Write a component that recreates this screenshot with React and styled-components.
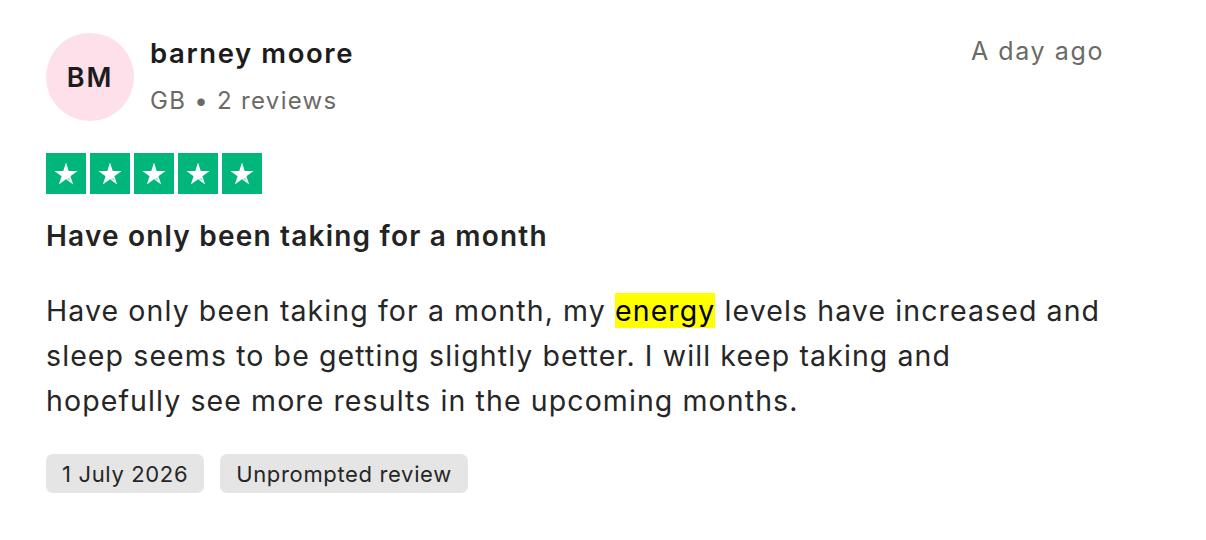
import styled, { createGlobalStyle } from 'styled-components';

const GlobalStyle = createGlobalStyle`
  body {
    margin: 0;
    background: #ffffff;
    font-family: Inter, "Helvetica Neue", Arial, sans-serif;
    color: #1c1c1c;
  }
`;

const Card = styled.article`
  width: 1058px;
  padding: 33px 0 0 46px;
`;

const Header = styled.header`
  display: flex;
  align-items: flex-start;
  gap: 16px;
`;

const Avatar = styled.div`
  width: 88px;
  height: 88px;
  border-radius: 50%;
  background: #fde0ea;
  display: flex;
  align-items: center;
  justify-content: center;
  font-size: 27px;
  font-weight: 600;
  letter-spacing: 1.8px;
  color: #1c1c1c;
`;

const Who = styled.div`
  flex: 1;
  display: flex;
  flex-direction: column;
  gap: 16px;
  padding-top: 3px;
`;

const Name = styled.div`
  font-size: 27.5px;
  font-weight: 600;
  letter-spacing: 1.6px;
`;

const Meta = styled.div`
  font-size: 24px;
  color: #6b6a66;
  letter-spacing: 1.3px;
`;

const When = styled.time`
  font-size: 25px;
  color: #6b6a66;
  padding-top: 3px;
  letter-spacing: 1.6px;
`;

const Stars = styled.div`
  display: flex;
  gap: 4px;
  margin-top: 32px;
`;

const StarBox = styled.div`
  width: 40px;
  height: 41px;
  background: ${(p) => p.color};
  display: flex;
  align-items: center;
  justify-content: center;
`;

const Title = styled.h2`
  margin: 25px 0 0;
  font-size: 28px;
  font-weight: 600;
  letter-spacing: 1.2px;
  color: #232323;
`;

const Body = styled.p`
  margin: 35px 0 0;
  font-size: 28.5px;
  line-height: 45px;
  letter-spacing: 1.1px;
  color: #262626;
  white-space: nowrap;
`;

const Mark = styled.mark`
  background: #ffff00;
  color: #000;
`;

const Tags = styled.div`
  display: flex;
  gap: 16px;
  margin-top: 31px;
`;

const Tag = styled.span`
  height: 39px;
  padding: 0 16px;
  background: #e5e5e5;
  border-radius: 7px;
  display: flex;
  align-items: center;
  font-size: 22px;
  letter-spacing: 0.65px;
  color: #262626;
`;

const Star = () => (
  <svg width="28" height="28" viewBox="0 0 24 24">
    <path
      d="M12 2.2l2.35 7.2h7.55l-6.1 4.45 2.35 7.2L12 16.6l-6.15 4.45 2.35-7.2-6.1-4.45h7.55z"
      fill="#fff"
    />
    <path d="M15.2 15.1l0.9 2.8-3.9-1.2z" fill="#00b67a" opacity="0.35" />
  </svg>
);

const App = () => (
  <>
    <GlobalStyle />
    <Card>
      <Header>
        <Avatar>BM</Avatar>
        <Who>
          <Name>barney moore</Name>
          <Meta>GB • 2 reviews</Meta>
        </Who>
        <When>A day ago</When>
      </Header>
      <Stars>
        {[0, 1, 2, 3, 4].map((i) => (
          <StarBox key={i} color="#00b67a">
            <Star />
          </StarBox>
        ))}
      </Stars>
      <Title>Have only been taking for a month</Title>
      <Body>
        Have only been taking for a month, my <Mark>energy</Mark> levels have increased and
        <br />
        sleep seems to be getting slightly better. I will keep taking and
        <br />
        hopefully see more results in the upcoming months.
      </Body>
      <Tags>
        <Tag>1 July 2026</Tag>
        <Tag>Unprompted review</Tag>
      </Tags>
    </Card>
  </>
);

export default App;
